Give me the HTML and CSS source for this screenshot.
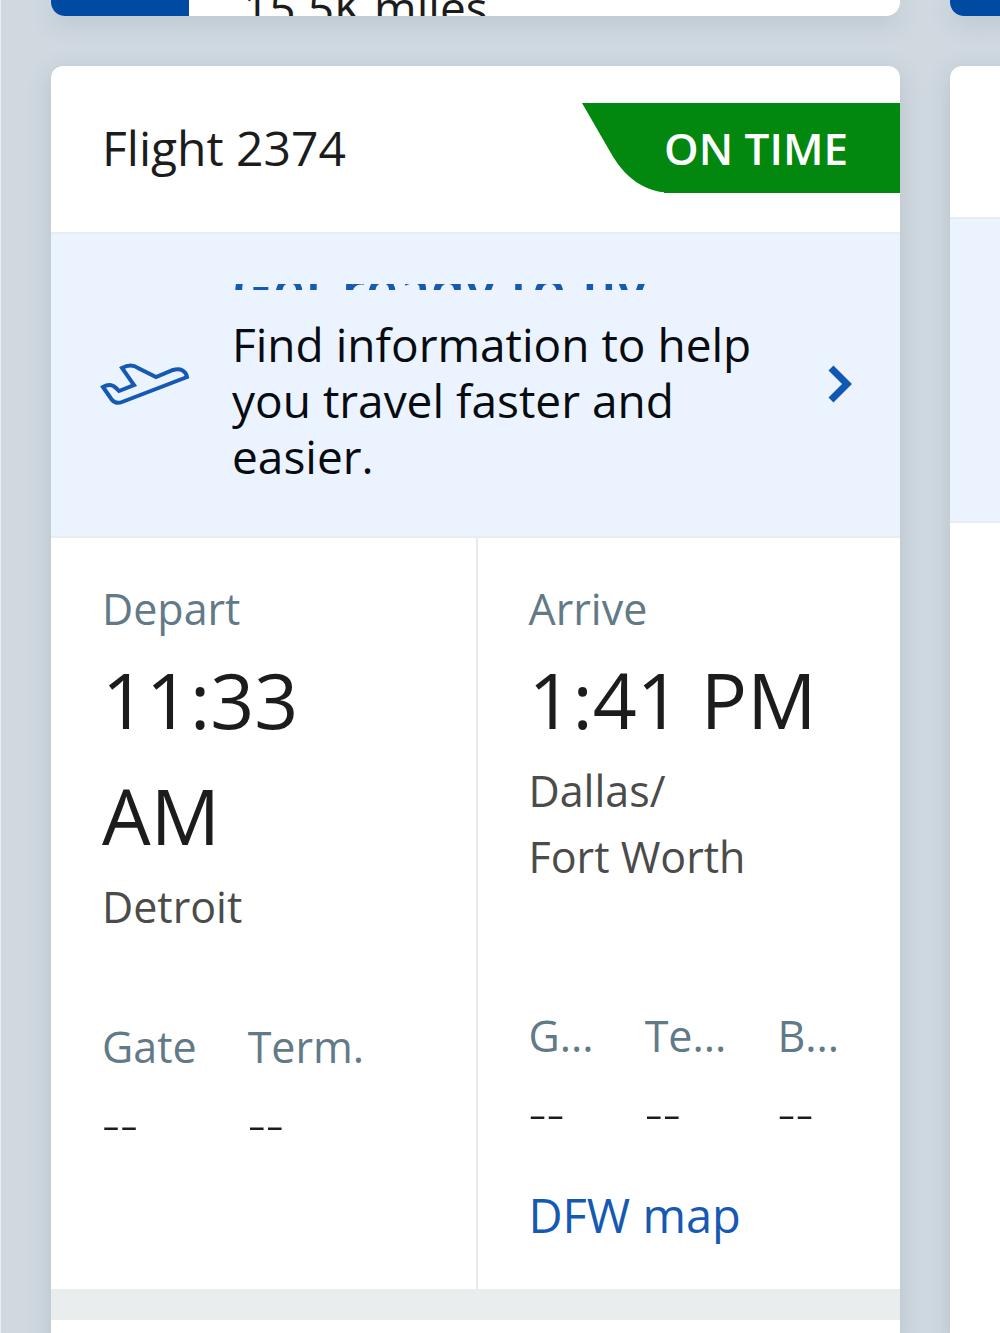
FILE: index.html
```html
<!DOCTYPE html>
<html lang="en">
<head>
    <meta charset="UTF-8">
    <meta name="viewport" content="width=device-width, initial-scale=1.0">
    <title>Flight 2374</title>
    <link rel="stylesheet" href="styles.css">
</head>
<body>
    <div class="track">
        <div class="card miles">
            <div class="miles-side"></div>
            <p class="miles-text">15.5K miles</p>
        </div>
        <div class="card miles">
            <div class="miles-side"></div>
        </div>
    </div>

    <main class="track flights">
        <article class="card">
            <header class="card-header">
                <h1>Flight 2374</h1>
                <div class="status">
                    <svg class="status-edge" viewBox="0 0 82 90" aria-hidden="true">
                        <path d="M0 0L30 52C43 74 62 90 92 90V0Z" fill="#02870f"/>
                    </svg>
                    <span class="status-text">ON TIME</span>
                </div>
            </header>

            <a class="info" href="#travel">
                <svg class="plane" viewBox="0 0 90 44" aria-hidden="true">
                    <path d="M3 25C8 22 12 22 16 26L19 29L34 23L22 6C29 2 34 3 38 6L56 15L73 8C81 6 86 9 87 15L22 40C17 42 14 40 12 38Z"/>
                </svg>
                <div class="info-text">
                    <h2><span>Get ready to fly</span></h2>
                    <p>Find information to help you travel faster and easier.</p>
                </div>
                <svg class="chevron" viewBox="0 0 24 38" aria-hidden="true">
                    <path d="M3 3L19 19L3 35"/>
                </svg>
            </a>

            <div class="times">
                <section class="depart">
                    <p class="label">Depart</p>
                    <p class="time">11:33<br>AM</p>
                    <p class="city">Detroit</p>
                    <dl class="details">
                        <div><dt>Gate</dt><dd>--</dd></div>
                        <div><dt>Term.</dt><dd>--</dd></div>
                    </dl>
                </section>
                <section class="arrive">
                    <p class="label">Arrive</p>
                    <p class="time">1:41 PM</p>
                    <p class="city">Dallas/<br>Fort Worth</p>
                    <dl class="details">
                        <div><dt>G...</dt><dd>--</dd></div>
                        <div><dt>Te...</dt><dd>--</dd></div>
                        <div><dt>B...</dt><dd>--</dd></div>
                    </dl>
                    <a class="map" href="#map">DFW map</a>
                </section>
            </div>
            <div class="divider"></div>
        </article>

        <article class="card next">
            <header class="card-header"></header>
            <div class="info"></div>
        </article>
    </main>
</body>
</html>
```

FILE: styles.css
```css
* {
    box-sizing: border-box;
}

body {
    margin: 0;
    background: #d0d9e0;
    border-left: 1px solid #e8edf0;
    font-family: "Open Sans", "Noto Sans", sans-serif;
    color: #1c1c1c;
    overflow: hidden;
}

h1, h2, p, dl, dd {
    margin: 0;
    font-weight: 400;
}

.track {
    display: flex;
    gap: 50px;
    padding-left: 50px;
}

.card {
    flex: 0 0 calc(100% - 100px);
    background: #fff;
    border-radius: 12px;
    box-shadow: 0 6px 24px rgba(70, 85, 100, 0.18);
    overflow: hidden;
}

.miles {
    display: flex;
    height: 16px;
    align-items: flex-end;
    border-radius: 0 0 14px 14px;
}

.miles-side {
    width: 138px;
    height: 16px;
    background: #004aa3;
}

.miles-text {
    margin: 0 0 -19px 54px;
    font-size: 46px;
    line-height: 56px;
}

.flights {
    margin-top: 50px;
    min-height: calc(100vh - 46px);
}

.card-header {
    display: flex;
    align-items: center;
    justify-content: space-between;
    height: 168px;
    padding: 0 0 2px 51px;
    border-bottom: 2px solid #e9edf1;
}

h1 {
    font-size: 48px;
    line-height: 56px;
}

.status {
    display: flex;
    align-items: center;
    height: 90px;
}

.status-edge {
    width: 82px;
    height: 90px;
}

.status-text {
    height: 90px;
    padding-right: 52px;
    background: #02870f;
    color: #fff;
    font-size: 44px;
    font-weight: 600;
    line-height: 90px;
}

.info {
    display: flex;
    align-items: center;
    height: 304px;
    padding: 0 48px 2px 49px;
    background: #ebf4fe;
    border-bottom: 2px solid #e9edf1;
    color: #080b10;
    text-decoration: none;
}

.plane {
    width: 90px;
    height: 44px;
    fill: none;
    stroke: #1559b3;
    stroke-width: 4;
}

.info-text {
    flex: 1;
    margin: 0 40px 0 42px;
    font-size: 46px;
    line-height: 56px;
}

/* heading is collapsed to a thin strip */
h2 {
    display: flex;
    align-items: center;
    height: 6px;
    margin-bottom: 26px;
    overflow: hidden;
    color: #1559b3;
    font-size: 56px;
    white-space: nowrap;
}

h2 span {
    font-weight: 600;
}

.chevron {
    width: 24px;
    height: 38px;
    fill: none;
    stroke: #1058b5;
    stroke-width: 7;
}

.times {
    display: grid;
    grid-template-columns: 1fr 1fr;
}

.times section {
    padding: 38px 0 41px 51px;
}

.times .arrive {
    border-left: 2px solid #e6e9ed;
}

.label, dt {
    color: #627a88;
    font-size: 43px;
    line-height: 66px;
}

.time {
    font-size: 77px;
    line-height: 116px;
}

.city {
    color: #4b4b4b;
    font-size: 43px;
    line-height: 66px;
}

.details {
    display: flex;
    gap: 51px;
    margin-top: 74px;
}

.arrive .details {
    margin-top: 113px;
}

dd {
    margin-top: 9px;
    font-size: 56px;
    font-weight: 300;
    line-height: 66px;
}

.map {
    display: block;
    margin-top: 38px;
    color: #1559b3;
    font-size: 47px;
    line-height: 66px;
    text-decoration: none;
}

.divider {
    height: 31px;
    background: #e9edee;
}

.next .card-header {
    height: 153px;
}
```
